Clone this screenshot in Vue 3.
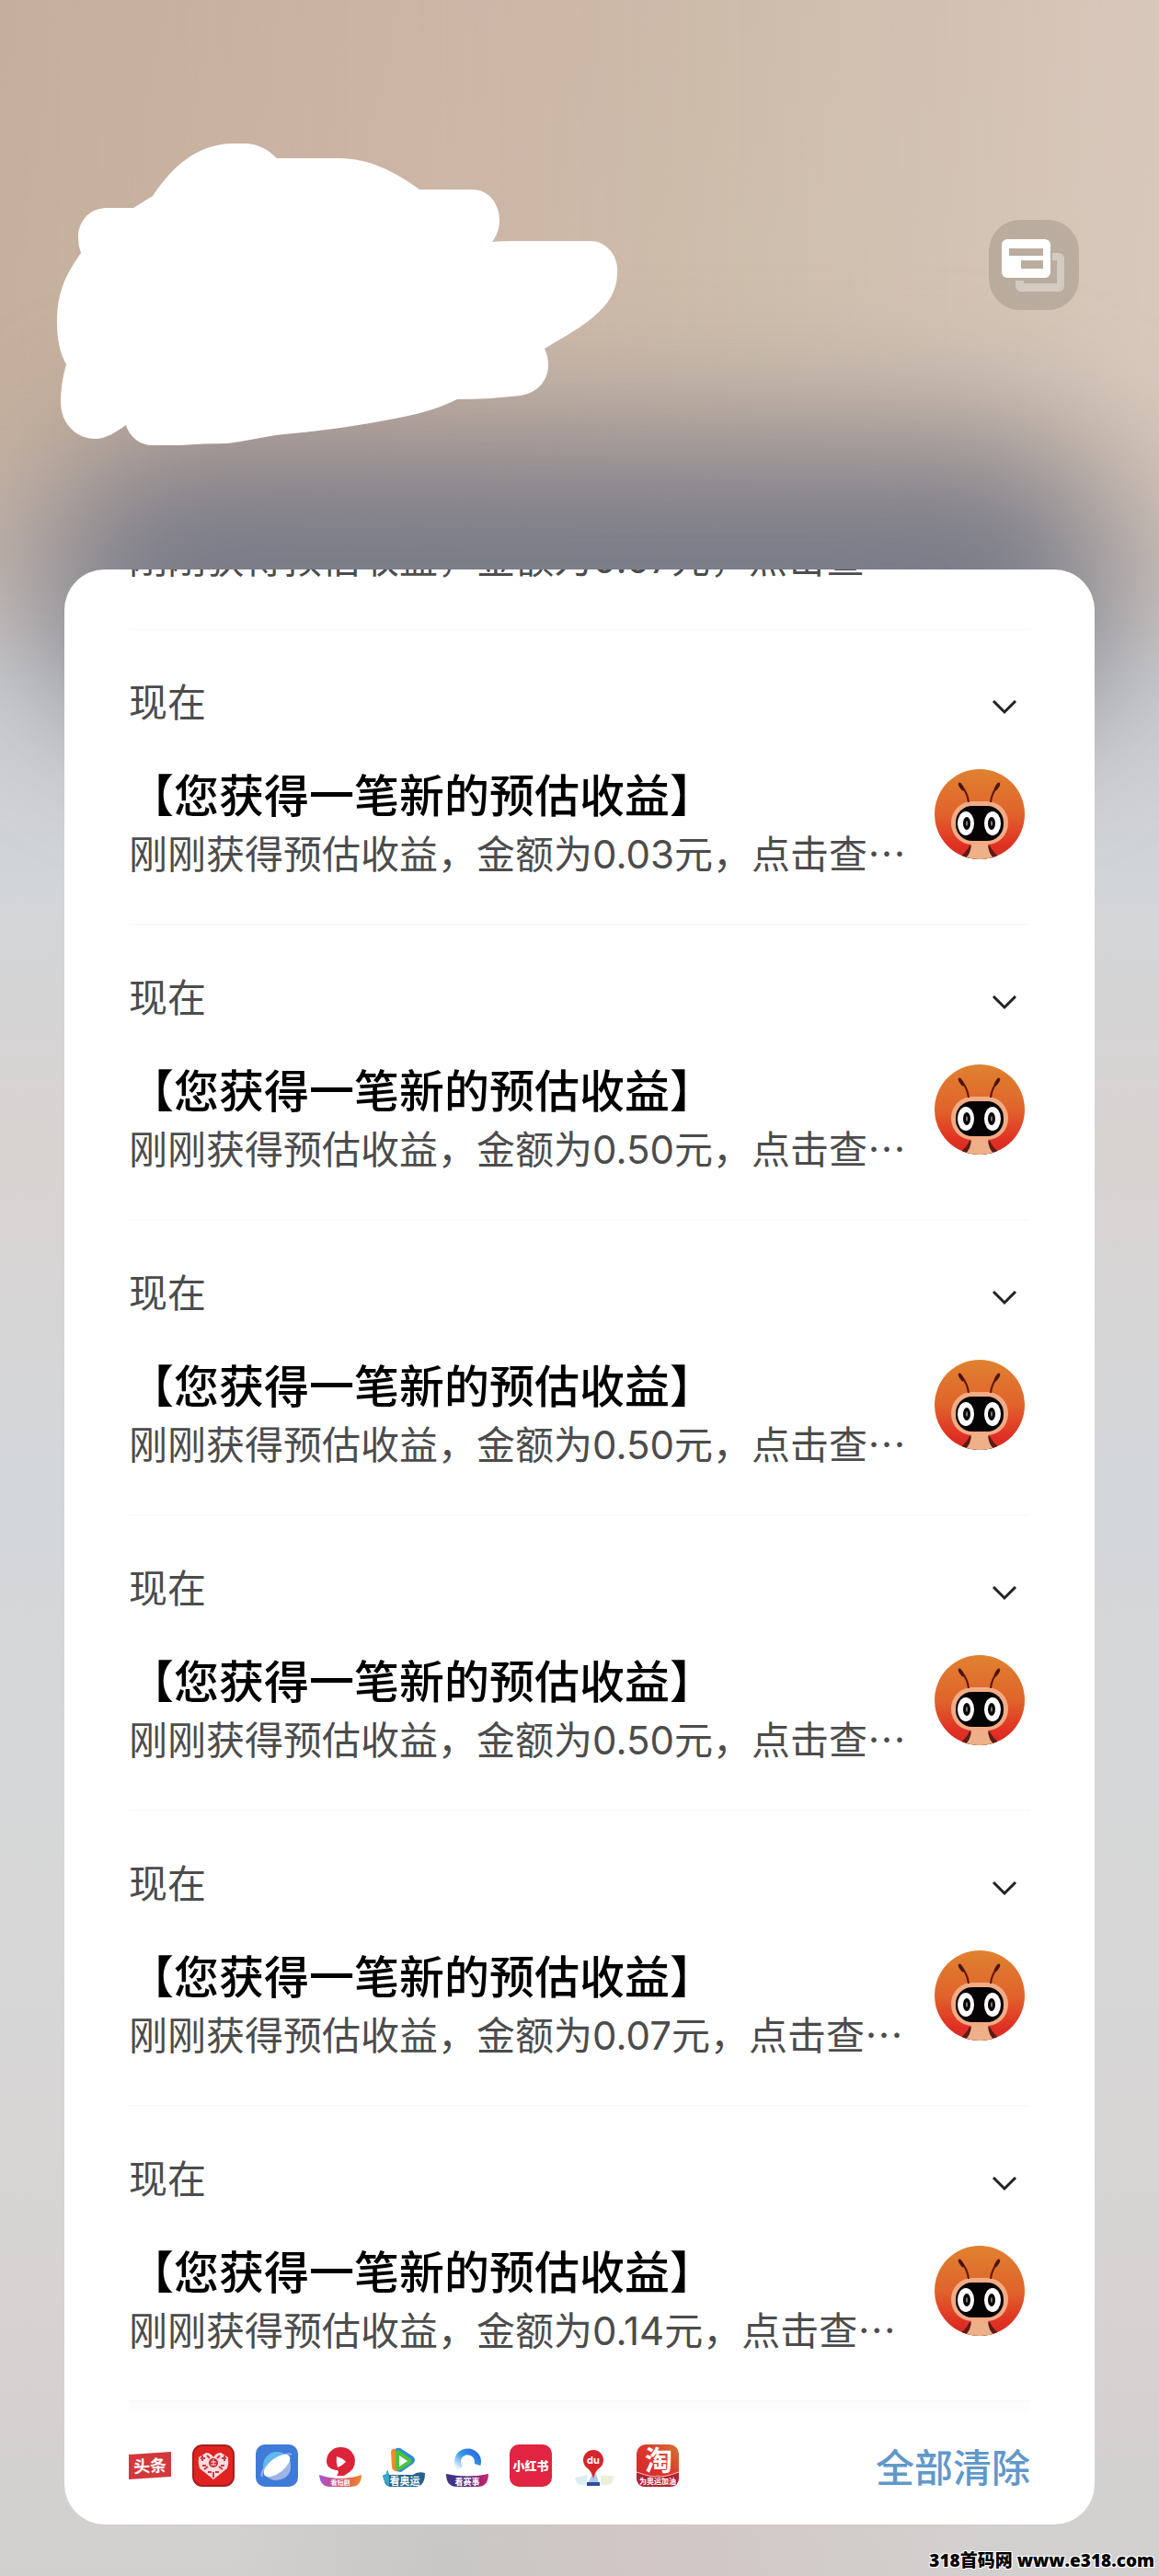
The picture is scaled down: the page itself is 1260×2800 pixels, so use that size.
<script setup>
const notices = [
  { id: 1, amount: '0.03' },
  { id: 2, amount: '0.50' },
  { id: 3, amount: '0.50' },
  { id: 4, amount: '0.50' },
  { id: 5, amount: '0.07' },
  { id: 6, amount: '0.14' },
]
</script>

<template>
  <main class="shade">
    <div class="glow" aria-hidden="true"></div>

    <header class="top">
      <svg class="scribble" viewBox="22 26 610 329" aria-hidden="true">
        <path
          fill="#fff"
          d="M261 42C250 31 238 26 227 26H210C174 28 148 50 126 83L105 96H76C57 96 45 111 45 128Q45 137 48 145C30 170 22 190 22 220Q22 249 32 266Q26 287 26 307C26 331 44 347 63 347C76 347 87 339 97 332C101 346 113 354 126 354H156Q180 352 206 352C228 350 248 344 269 342Q315 338 362 330C400 323 430 318 457 304Q492 304 526 300C544 297 556 284 556 267Q556 257 552 249C590 226 631 206 631 167C633 147 618 132 602 132H520Q505 132 495 133Q503 122 503 110C503 92 492 76 473 76H416C390 57 362 42 328 42Z"
        />
      </svg>
      <button class="switcher" type="button" aria-label="通知">
        <svg viewBox="0 0 98 98">
          <path
            fill="#fff"
            fill-opacity=".36"
            fill-rule="evenodd"
            d="M69 36h7a6 6 0 0 1 6 6v30a6 6 0 0 1-6 6H35a6 6 0 0 1-6-6v-6h9v3h36V44h-5z"
          />
          <path
            fill="#fff"
            fill-rule="evenodd"
            d="M20 21h41a6 6 0 0 1 6 6v30a6 6 0 0 1-6 6H20a6 6 0 0 1-6-6V27a6 6 0 0 1 6-6zM22 31v8h37v-8zM35 44v9h24v-9z"
          />
        </svg>
      </button>
    </header>

    <section class="panel">
      <div class="partial">
        <p class="body">刚刚获得预估收益，金额为<span class="num">0.07</span>元，点击查…</p>
      </div>

      <article v-for="n in notices" :key="n.id" class="notice">
        <div class="meta">
          <time class="time">现在</time>
          <button class="expand" type="button" aria-label="展开">
            <svg viewBox="0 0 28 16">
              <path d="M2 1l12 12L26 1" fill="none" stroke="#222" stroke-width="3" />
            </svg>
          </button>
        </div>
        <div class="row">
          <div class="copy">
            <h2 class="title">【您获得一笔新的预估收益】</h2>
            <p class="body">刚刚获得预估收益，金额为<span class="num">{{ n.amount }}</span>元，点击查…</p>
          </div>
          <svg class="avatar" viewBox="0 0 98 98" aria-hidden="true">
            <defs>
              <linearGradient :id="'sky' + n.id" x1="0" y1="0" x2="0" y2="1">
                <stop offset="0" stop-color="#e08230" />
                <stop offset=".5" stop-color="#e0632b" />
                <stop offset=".85" stop-color="#e03024" />
                <stop offset="1" stop-color="#d52a22" />
              </linearGradient>
              <clipPath :id="'disc' + n.id"><circle cx="49" cy="49" r="49" /></clipPath>
            </defs>
            <g :clip-path="`url(#disc${n.id})`">
              <rect width="98" height="98" :fill="`url(#sky${n.id})`" />
              <path d="M24 98q10-6 14-15h22q4 9 14 15z" fill="#5a1c14" />
              <path d="M32 98q8-5 8-18h18q0 13 8 18z" fill="#eeb088" />
              <rect x="18" y="35" width="62" height="47" rx="23" fill="#f2ab84" />
              <rect x="23" y="40" width="52" height="38" rx="18" fill="#050303" />
            </g>
            <g fill="none" stroke="#5c1712" stroke-width="2">
              <path d="M37 36Q36 26 29 18M61 36q1-10 8-18" />
            </g>
            <ellipse cx="29" cy="19" rx="2" ry="5" fill="#4a1511" transform="rotate(-32 29 19)" />
            <ellipse cx="68" cy="19" rx="2" ry="5" fill="#4a1511" transform="rotate(32 68 19)" />
            <ellipse cx="34" cy="59" rx="9" ry="13" fill="#fff" />
            <ellipse cx="63" cy="59" rx="9" ry="13" fill="#fff" />
            <ellipse cx="35" cy="59" rx="4" ry="7" fill="#0a0606" />
            <ellipse cx="62" cy="59" rx="4" ry="7" fill="#0a0606" />
            <ellipse cx="35" cy="59" rx="1" ry="3" fill="#8a8484" />
            <ellipse cx="62" cy="59" rx="1" ry="3" fill="#8a8484" />
          </svg>
        </div>
      </article>

      <footer class="bar">
        <div class="apps">
          <svg class="app" viewBox="0 0 46 46">
            <path d="M0 11L46 8V35L0 38z" fill="#d3383c" />
            <text x="23" y="30" class="glyph" font-size="18" text-anchor="middle" transform="rotate(-3 23 23)">头条</text>
          </svg>
          <svg class="app" viewBox="0 0 46 46">
            <rect x="1" y="1" width="44" height="44" rx="10" fill="#e02320" stroke="#a81e1c" stroke-width="2" />
            <path d="M23 38L8 26Q6 20 7 14l8-5q5 0 8 5q3-5 8-5l8 5q1 6-1 12z" fill="#fbdcdc" />
            <path
              d="M9 15h5M11 12v6M32 15h5M35 12v6M16 12l3 3M30 12l-3 3M11 23h4M31 23h4M13 27l4-3M33 27l-4-3M17 30h4M25 30h4M23 30v6"
              fill="none"
              stroke="#d0344a"
              stroke-width="2"
            />
            <circle cx="23" cy="20" r="5" fill="#c92337" />
            <path d="M20 19h6M23 16v7M20 22h6" stroke="#fbdcdc" stroke-width="1" />
          </svg>
          <svg class="app" viewBox="0 0 46 46">
            <rect width="46" height="46" rx="10" fill="#3f7bd8" />
            <circle cx="23" cy="23" r="15" fill="#63b8ef" />
            <path d="M10 33Q24 34 37 17q5 19-14 22-8 0-13-6z" fill="#9fb4e6" />
            <path d="M7 35q-2-4 4-11M39 11q-3-2-10 1" stroke="#8fb4ee" stroke-width="2" fill="none" />
            <ellipse cx="23" cy="23" rx="17" ry="8" fill="#fff" transform="rotate(-38 23 23)" />
          </svg>
          <svg class="app" viewBox="0 0 46 46">
            <defs>
              <linearGradient id="drama" x1="0" x2="1">
                <stop offset="0" stop-color="#a35ad6" />
                <stop offset=".5" stop-color="#d8486c" />
                <stop offset="1" stop-color="#ee8b2a" />
              </linearGradient>
            </defs>
            <path d="M0 33q23 8 46 0 0 13-12 13H12Q1 46 0 33z" fill="url(#drama)" />
            <path d="M23 3a15 15 0 0 1 10 27l-6 4-8 0q3-4 1-6Q8 27 8 18A15 15 0 0 1 23 3z" fill="#dc2338" />
            <path d="M19 13q7 2 10 6-4 4-9 6-2-6-1-12z" fill="#fff" />
            <text x="23" y="44" class="glyph" font-size="7" text-anchor="middle">看短剧</text>
          </svg>
          <svg class="app" viewBox="0 0 46 46">
            <path d="M9 8q1-4 5-3l4 24q-7 1-8-4z" fill="#f08a2c" />
            <path d="M14 6q0-3 5-2l14 9q4 4 0 8L20 30q-5 0-5-4z" fill="#2c8bdc" />
            <path d="M14 8q1-3 5-1l11 8q3 3 0 6l-11 7q-4 1-5-2z" fill="#4cc13c" />
            <path d="M18 12l9 6-9 6z" fill="#fff" />
            <path d="M0 34l4-2 1-4 2 5h26q5-4 13-2 0 15-11 15H8q-6-2-6-6z" fill="#23648c" />
            <path d="M0 34l4-2 1-4 2 5v12q-5-2-7-11z" fill="#35a8cc" />
            <text x="24" y="44" class="glyph" font-size="11" text-anchor="middle">看奥运</text>
          </svg>
          <svg class="app" viewBox="0 0 46 46">
            <defs>
              <linearGradient id="ring" x1="1" y1="0" x2="0" y2="1">
                <stop offset="0" stop-color="#2467e0" />
                <stop offset=".5" stop-color="#3b9ae6" />
                <stop offset="1" stop-color="#eaf6fc" />
              </linearGradient>
              <linearGradient id="match" x1="0" x2="1">
                <stop offset="0" stop-color="#3b3488" />
                <stop offset=".5" stop-color="#5a2a7c" />
                <stop offset="1" stop-color="#d2246c" />
              </linearGradient>
            </defs>
            <path d="M15 26A11 11 0 1 1 34 22" fill="none" stroke="url(#ring)" stroke-width="7" />
            <path d="M0 32q23 5 46 0 0 14-12 14H12Q0 46 0 32z" fill="url(#match)" />
            <text x="23" y="44" class="glyph" font-size="9" text-anchor="middle">看赛事</text>
          </svg>
          <svg class="app" viewBox="0 0 46 46">
            <rect width="46" height="46" rx="10" fill="#e02441" />
            <text x="23" y="28" class="glyph heavy" font-size="13" text-anchor="middle">小红书</text>
          </svg>
          <svg class="app" viewBox="0 0 46 46">
            <path d="M2 36l14-3-2 11H7q-4-2-5-8z" fill="#dceef2" />
            <path d="M30 34l14 0q1 8-6 10h-8z" fill="#eaf1d8" />
            <path d="M21 32h4l4 13H15z" fill="#a9c9ee" />
            <path d="M15 41h14v4H15z" fill="#2f4d9c" />
            <path d="M22 6a11 11 0 0 1 11 11q0 6-6 10-3 3-5 10-2-7-5-10-6-4-6-10A11 11 0 0 1 22 6z" fill="#d8252c" />
            <text x="22" y="21" class="glyph latin" font-size="11" text-anchor="middle">du</text>
          </svg>
          <svg class="app" viewBox="0 0 46 46">
            <defs>
              <linearGradient id="mall" x1="0" y1="1" x2="1" y2="0">
                <stop offset="0" stop-color="#d3222a" />
                <stop offset=".6" stop-color="#dd3a2c" />
                <stop offset="1" stop-color="#cf7a36" />
              </linearGradient>
            </defs>
            <rect width="46" height="46" rx="10" fill="url(#mall)" />
            <path d="M0 30q20 7 23 4 4 3 23-4v6q0 10-10 10H10Q0 46 0 36z" fill="#b02236" />
            <path d="M0 30q20 7 23 4 4 3 23-4" fill="none" stroke="#f5c9a8" stroke-width="1" />
            <text x="24" y="28" class="glyph" font-size="30" text-anchor="middle">淘</text>
            <text x="23" y="43" class="glyph" font-size="8" text-anchor="middle">为奥运加油</text>
          </svg>
        </div>
        <button class="clear" type="button">全部清除</button>
      </footer>
    </section>

    <p class="credit">318首码网 www.e318.com</p>
  </main>
</template>

<style>
body {
  margin: 0;
}
</style>

<style scoped>
.shade {
  position: relative;
  overflow: hidden;
  padding: 156px 70px 56px;
  font-family: "Noto Sans CJK SC", sans-serif;
  background:
    linear-gradient(90deg, transparent 20%, rgba(190, 190, 188, 0.5) 38%, rgba(208, 184, 178, 0.4) 56%, transparent 85%) 0 100% / 100% 56px no-repeat,
    linear-gradient(180deg, #ccb8a8 0, #cdbbab 480px, #c9bdb5 600px, #cbccd0 740px, #d2d5d8 960px, #d8d3d1 1250px, #d3d6d9 1600px, #d7d7d7 2100px, #d6d3d2 2500px, #d2d0cf 100%);
}

/* Horizontal tint of the wallpaper, fading out beside the panel */
.shade::before {
  content: "";
  position: absolute;
  inset: 0 0 auto;
  height: 760px;
  background: linear-gradient(90deg, rgba(186, 160, 138, 0.4), rgba(205, 170, 155, 0.25) 35%, rgba(210, 200, 180, 0.3) 65%, rgba(224, 210, 200, 0.6));
  mask-image: linear-gradient(#000 400px, transparent);
}

/* Blurred wallpaper shadow behind the top of the panel */
.glow {
  position: absolute;
  top: 470px;
  left: 50px;
  right: 50px;
  height: 320px;
  border-radius: 150px;
  background: linear-gradient(#8f868a, #777a87 110px);
  filter: blur(76px);
}

.top {
  position: relative;
  display: flex;
  justify-content: space-between;
  align-items: center;
  margin: 0 17px 134px -8px;
}

.scribble {
  width: 610px;
  height: 329px;
}

.switcher {
  width: 98px;
  height: 98px;
  margin-bottom: 66px;
  padding: 0;
  border: 0;
  border-radius: 34px;
  background: rgba(168, 156, 142, 0.6);
}

.switcher svg,
.expand svg {
  display: block;
  width: 100%;
}

.panel {
  position: relative;
  overflow: hidden;
  padding: 0 70px;
  border-radius: 44px;
  background: #fff;
}

.partial {
  margin-top: -46px;
  padding-bottom: 46px;
  border-bottom: 2px solid #f9f9f9;
}

.notice {
  padding: 48px 0 46px;
  border-bottom: 2px solid #f9f9f9;
}

.meta {
  display: flex;
  justify-content: space-between;
  align-items: center;
  margin-bottom: 41px;
}

.time {
  font-size: 42px;
  line-height: 56px;
  color: #4c4c4c;
}

.expand {
  width: 28px;
  margin: 16px 14px 0 0;
  padding: 0;
  border: 0;
  background: none;
}

.row {
  display: flex;
  justify-content: space-between;
  align-items: flex-start;
}

.copy {
  min-width: 0;
}

.title,
.body {
  margin: 0;
  line-height: 64px;
  white-space: nowrap;
}

.title {
  font-size: 49px;
  font-weight: 500;
  color: #000;
}

.body {
  font-size: 42px;
  color: #4c4c4c;
}

.num {
  font-family: Inter, sans-serif;
  line-height: 1;
}

.avatar {
  flex: none;
  width: 98px;
  height: 98px;
  margin: 6px 6px 0 0;
}

.bar {
  display: flex;
  justify-content: space-between;
  align-items: center;
  padding: 26px 0 33px;
  border-top: 12px solid #fdfdfd;
}

.apps {
  display: flex;
  gap: 23px;
}

.app {
  width: 46px;
  height: 46px;
}

.glyph {
  fill: #fff;
  font-weight: 700;
}

.heavy {
  font-weight: 900;
}

.latin {
  font-family: Inter, sans-serif;
}

.clear {
  padding: 0;
  border: 0;
  background: none;
  font-family: inherit;
  font-size: 42px;
  font-weight: 500;
  line-height: 62px;
  color: #6198c9;
}

.credit {
  position: absolute;
  right: 5px;
  bottom: 3px;
  margin: 0;
  font-family: "Open Sans", "Noto Sans CJK SC", sans-serif;
  font-size: 19px;
  font-weight: 800;
  line-height: 28px;
  color: #000;
  text-shadow: 1px 1px 0 #fff, -1px -1px 0 #fff, 1px -1px 0 #fff, -1px 1px 0 #fff;
}
</style>
